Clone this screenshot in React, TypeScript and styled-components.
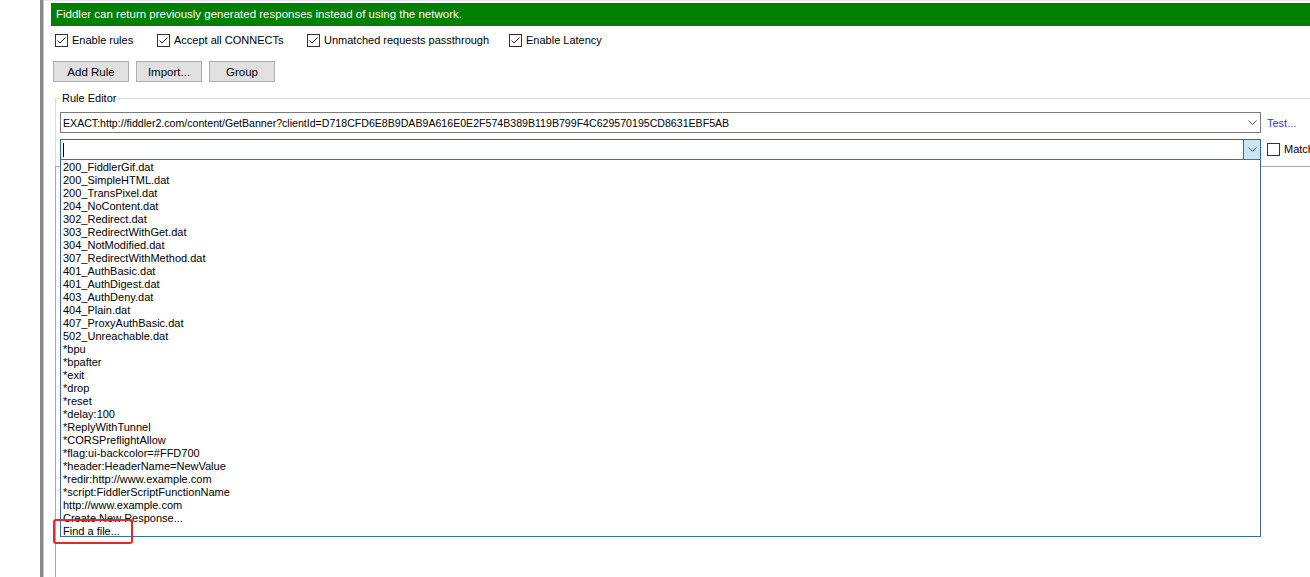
import React from 'react'
import styled, { createGlobalStyle } from 'styled-components'

const GlobalStyle = createGlobalStyle`
  html, body {
    margin: 0;
    padding: 0;
    background: #fff;
  }
  body {
    font-family: 'Liberation Sans', Arial, sans-serif;
    font-size: 11px;
    color: #000;
  }
`

const responses = [
  '200_FiddlerGif.dat',
  '200_SimpleHTML.dat',
  '200_TransPixel.dat',
  '204_NoContent.dat',
  '302_Redirect.dat',
  '303_RedirectWithGet.dat',
  '304_NotModified.dat',
  '307_RedirectWithMethod.dat',
  '401_AuthBasic.dat',
  '401_AuthDigest.dat',
  '403_AuthDeny.dat',
  '404_Plain.dat',
  '407_ProxyAuthBasic.dat',
  '502_Unreachable.dat',
  '*bpu',
  '*bpafter',
  '*exit',
  '*drop',
  '*reset',
  '*delay:100',
  '*ReplyWithTunnel',
  '*CORSPreflightAllow',
  '*flag:ui-backcolor=#FFD700',
  '*header:HeaderName=NewValue',
  '*redir:http://www.example.com',
  '*script:FiddlerScriptFunctionName',
  'http://www.example.com',
  'Create New Response...',
  'Find a file...',
]

const options = [
  { label: 'Enable rules', width: 102 },
  { label: 'Accept all CONNECTs', width: 150 },
  { label: 'Unmatched requests passthrough', width: 202 },
  { label: 'Enable Latency', width: 120 },
]

const Check = ({ checked }: { checked: boolean }) => (
  <CheckBox>
    {checked && (
      <svg width="11" height="11" viewBox="0 0 11 11">
        <path d="M1.5 5.5 L4 8 L9.5 2.5" fill="none" stroke="#222" strokeWidth="1" />
      </svg>
    )}
  </CheckBox>
)

const Chevron = () => (
  <svg width="9" height="5" viewBox="0 0 9 5">
    <path d="M0.5 0.5 L4.5 4.5 L8.5 0.5" fill="none" stroke="#5a5a5a" strokeWidth="1" />
  </svg>
)

const App: React.FC = () => {
  return (
    <>
      <GlobalStyle />
      <Frame>
        <Gutter />
        <Splitter />
        <Main>
          <Banner>Fiddler can return previously generated responses instead of using the network.</Banner>
          <OptionRow>
            {options.map((o) => (
              <Option key={o.label} $w={o.width}>
                <Check checked />
                <span>{o.label}</span>
              </Option>
            ))}
          </OptionRow>
          <ButtonRow>
            <Button $w={76}>Add Rule</Button>
            <Button $w={66}>Import...</Button>
            <Button $w={66}>Group</Button>
          </ButtonRow>
          <Group>
            <GroupHead>
              <GroupRule $short />
              <GroupLabel>Rule Editor</GroupLabel>
              <GroupRule />
            </GroupHead>
            <GroupBody>
              <FieldRow>
                <Combo>
                  <ComboText>
                    EXACT:http://fiddler2.com/content/GetBanner?clientId=D718CFD6E8B9DAB9A616E0E2F574B389B119B799F4C629570195CD8631EBF5AB
                  </ComboText>
                  <ComboButton>
                    <Chevron />
                  </ComboButton>
                </Combo>
                <TestLink>Test...</TestLink>
              </FieldRow>
              <FieldRow>
                <Combo $focused>
                  <ComboText>
                    <Caret />
                  </ComboText>
                  <ComboButton $focused>
                    <Chevron />
                  </ComboButton>
                  <DropList>
                    {responses.map((r) => (
                      <DropItem key={r}>
                        {r}
                        {r === 'Find a file...' && <Callout />}
                      </DropItem>
                    ))}
                  </DropList>
                </Combo>
                <Option $w={80}>
                  <Check checked={false} />
                  <span>Match only once</span>
                </Option>
              </FieldRow>
            </GroupBody>
          </Group>
          <LowerPanel />
        </Main>
      </Frame>
    </>
  )
}
export default App

const Frame = styled.div`
  display: flex;
  width: 1310px;
  height: 577px;
  overflow: hidden;
  background: #fff;
`

const Gutter = styled.div`
  width: 40px;
  flex: none;
  background: #fff;
`

const Splitter = styled.div`
  width: 3px;
  flex: none;
  background: #8a8a8a;
  border-right: 1px solid #c4c4c4;
`

const Main = styled.div`
  flex: 1;
  min-width: 0;
  display: flex;
  flex-direction: column;
  padding-top: 2px;
  border-top: 1px solid #e6e6e6;
  box-sizing: border-box;
`

const Banner = styled.div`
  margin-left: 7px;
  height: 23px;
  line-height: 23px;
  padding-left: 5px;
  background: #007f00;
  color: #fff;
  font-size: 11.5px;
  white-space: nowrap;
  flex: none;
`

const OptionRow = styled.div`
  display: flex;
  margin: 8px 0 0 11px;
  height: 13px;
`

const Option = styled.label<{ $w: number }>`
  display: flex;
  align-items: center;
  gap: 4px;
  width: ${(p) => p.$w}px;
  flex: none;
  white-space: nowrap;
  line-height: 13px;
`

const CheckBox = styled.span`
  width: 13px;
  height: 13px;
  box-sizing: border-box;
  border: 1px solid #333;
  background: #fff;
  display: flex;
  align-items: center;
  justify-content: center;
  flex: none;
`

const ButtonRow = styled.div`
  display: flex;
  gap: 7px;
  margin: 14px 0 0 9px;
`

const Button = styled.button<{ $w: number }>`
  width: ${(p) => p.$w}px;
  height: 21px;
  padding: 0;
  background: #e1e1e1;
  border: 1px solid #adadad;
  font-family: 'Liberation Sans', Arial, sans-serif;
  font-size: 11.5px;
  color: #000;
`

const Group = styled.div`
  margin: 10px 0 0 11px;
`

const GroupHead = styled.div`
  display: flex;
  align-items: center;
  height: 12px;
`

const GroupRule = styled.div<{ $short?: boolean }>`
  height: 1px;
  background: #dcdcdc;
  flex: ${(p) => (p.$short ? '0 0 6px' : '1')};
`

const GroupLabel = styled.span`
  padding: 0 2px 0 1px;
  line-height: 12px;
`

const GroupBody = styled.div`
  border-left: 1px solid #dcdcdc;
  margin-top: -6px;
  padding: 14px 0 6px 4px;
  display: flex;
  flex-direction: column;
  gap: 6px;
`

const FieldRow = styled.div`
  display: flex;
  align-items: center;
  gap: 6px;
`

const Combo = styled.div<{ $focused?: boolean }>`
  position: relative;
  display: flex;
  width: 1201px;
  height: 21px;
  flex: none;
  box-sizing: border-box;
  border: 1px solid ${(p) => (p.$focused ? '#2b6ca3' : '#7a7a7a')};
  background: #fff;
`

const ComboText = styled.div`
  flex: 1;
  display: flex;
  align-items: center;
  padding-left: 2px;
  font-size: 10.6px;
  white-space: nowrap;
  overflow: hidden;
`

const ComboButton = styled.div<{ $focused?: boolean }>`
  width: 16px;
  display: flex;
  align-items: center;
  justify-content: center;
  background: ${(p) => (p.$focused ? '#cce4f7' : 'transparent')};
  border-left: 1px solid ${(p) => (p.$focused ? '#2b6ca3' : 'transparent')};
`

const Caret = styled.span`
  display: block;
  width: 1px;
  height: 14px;
  background: #000;
`

const TestLink = styled.span`
  color: #1f3fbf;
  white-space: nowrap;
`

const DropList = styled.div`
  position: absolute;
  left: -1px;
  top: 100%;
  width: 1201px;
  height: 378px;
  box-sizing: border-box;
  border: 1px solid #3c6d9c;
  background: #fff;
  padding: 1px 0 0 2px;
  z-index: 2;
`

const DropItem = styled.div`
  position: relative;
  height: 13px;
  line-height: 13px;
  white-space: nowrap;
`

const Callout = styled.span`
  position: absolute;
  left: -10px;
  top: -6px;
  width: 80px;
  height: 25px;
  box-sizing: border-box;
  border: 2.5px solid #e32b25;
  border-radius: 3px;
`

const LowerPanel = styled.div`
  flex: 1;
  margin-left: 11px;
  border-top: 1px solid #a8a8a8;
  border-left: 1px solid #a8a8a8;
`
